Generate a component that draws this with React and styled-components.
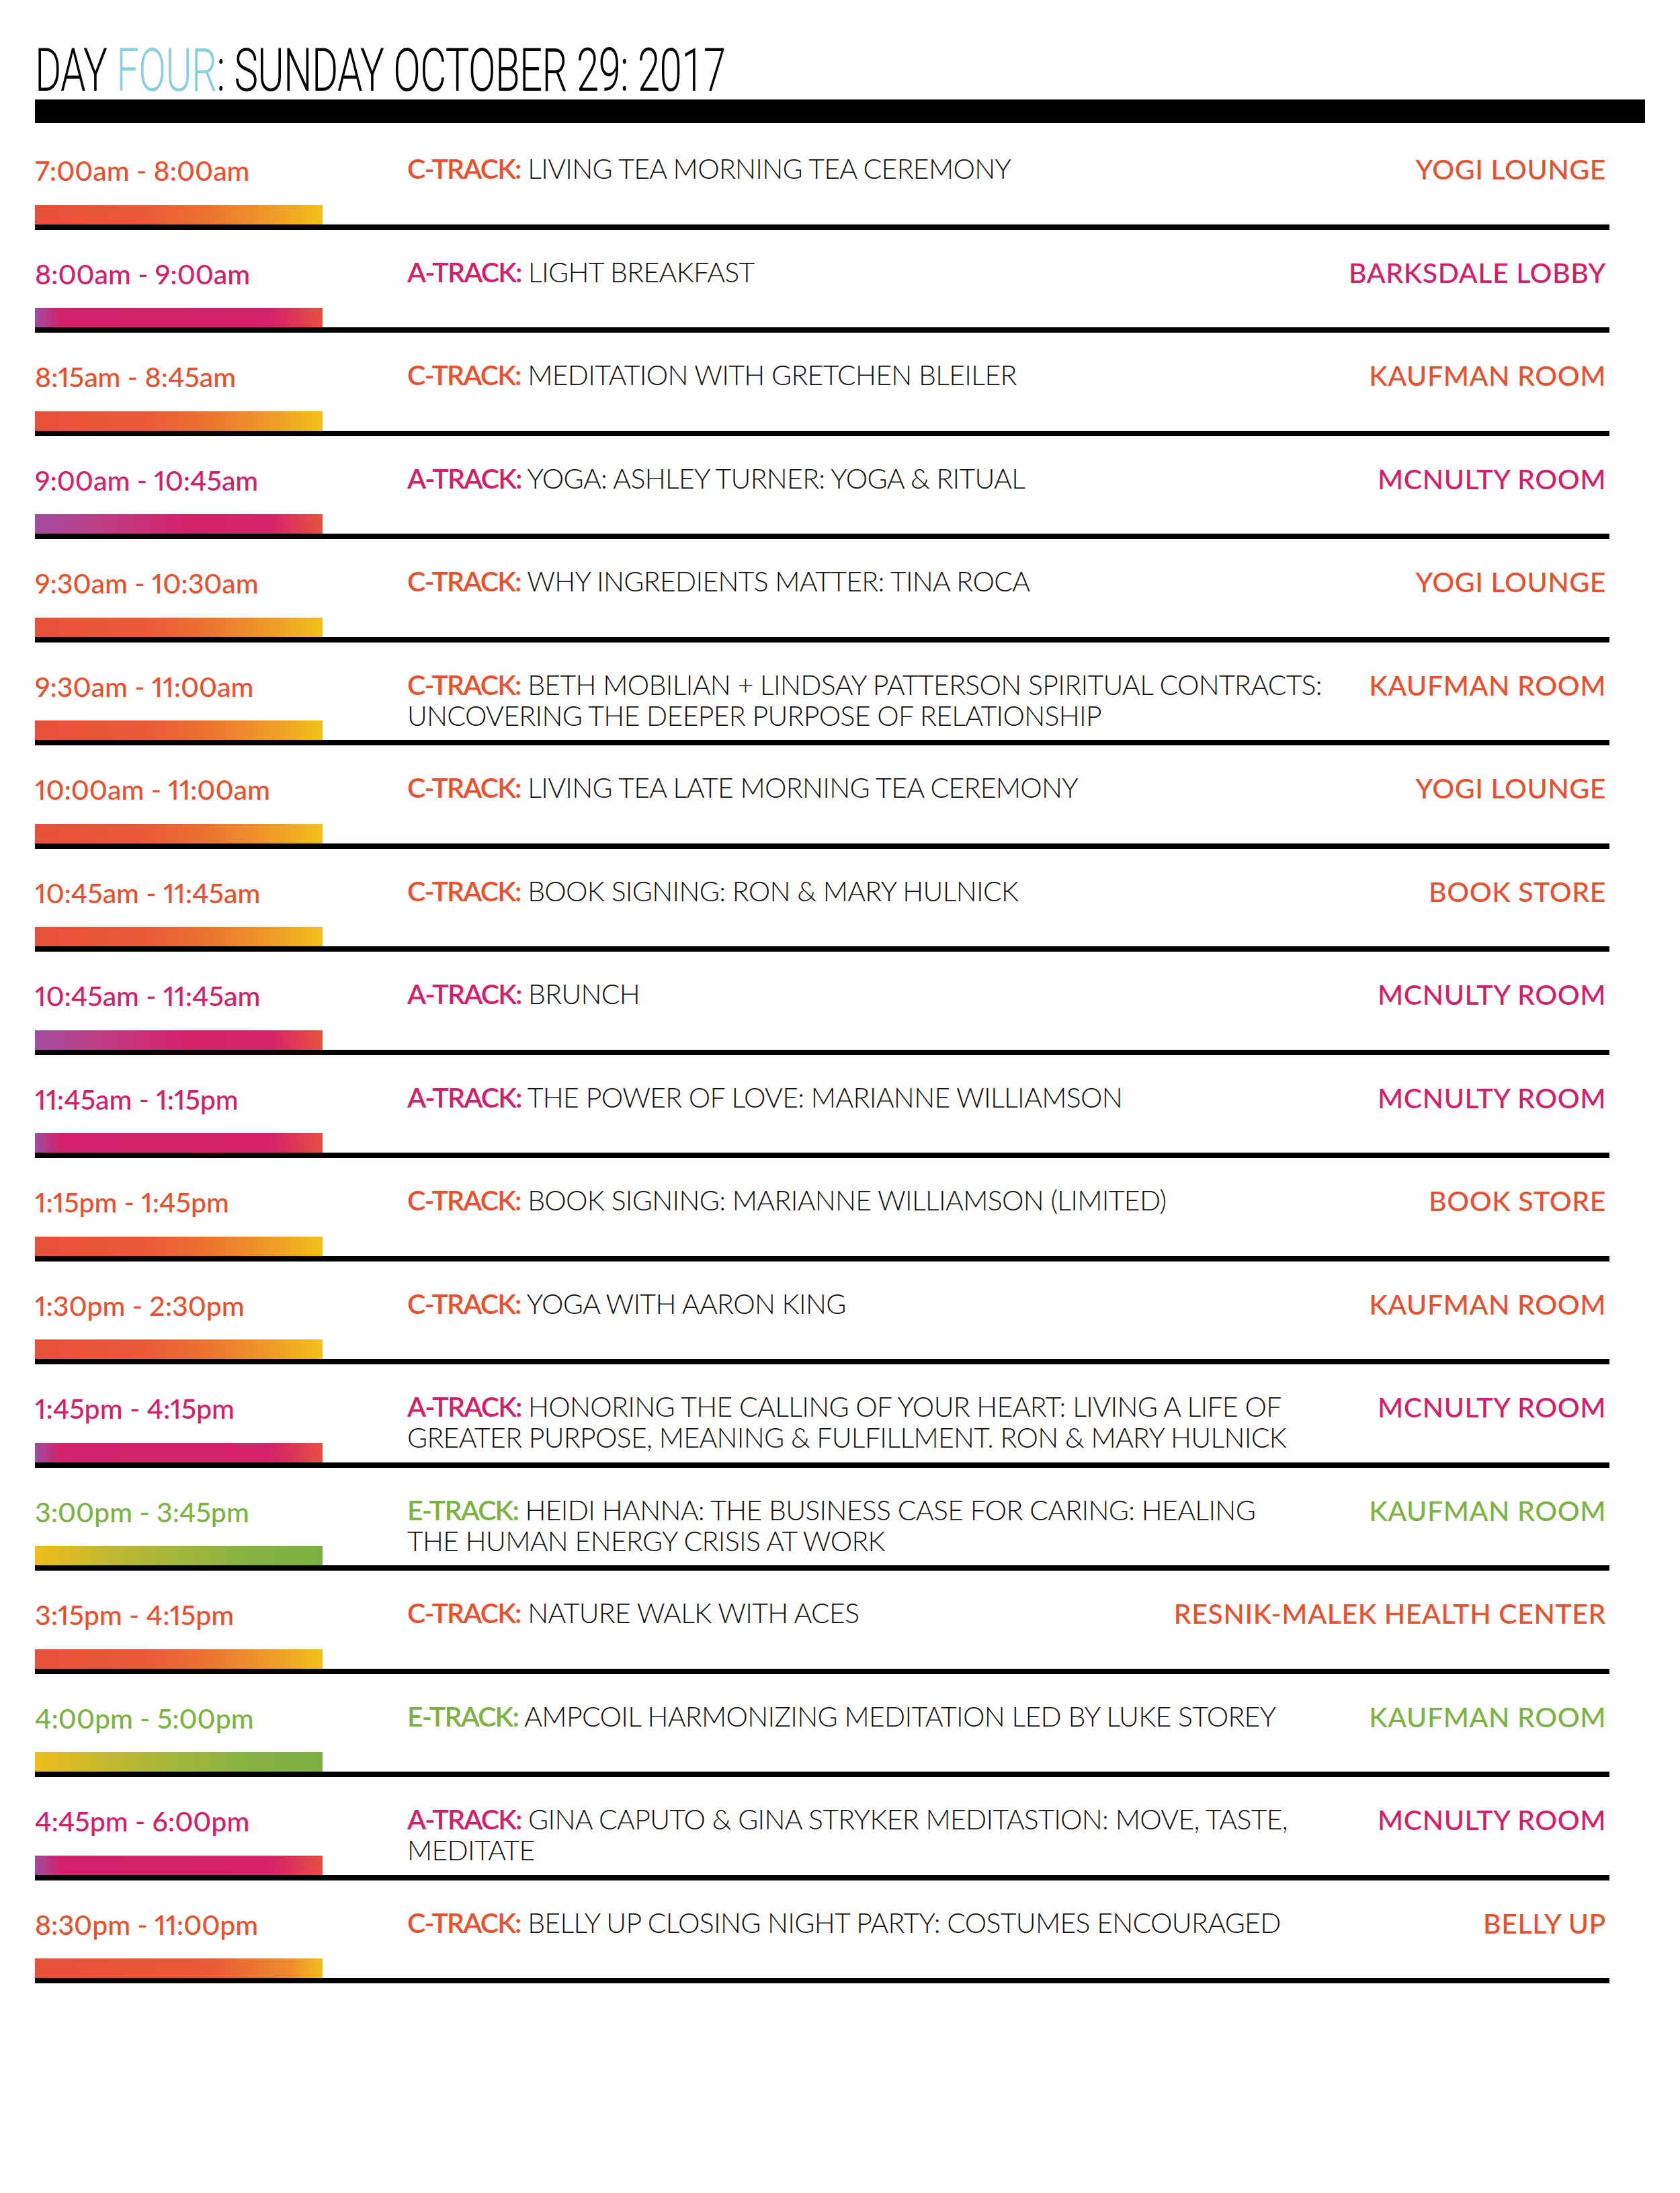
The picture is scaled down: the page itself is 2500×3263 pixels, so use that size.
import React from "react";
import styled, { createGlobalStyle } from "styled-components";

const colors = {
  c: "#e8512f",
  a: "#d2206b",
  e: "#7cb342",
};

const bars = {
  c: "linear-gradient(90deg, #e8503a 0%, #e95a37 38%, #ec7331 60%, #f0a027 85%, #f3c01a 100%)",
  c2: "linear-gradient(82deg, #e8503a 0%, #ea5a36 62%, #ef8b2c 88%, #f4c01b 100%)",
  a1: "linear-gradient(84deg, #9c4fa2 0%, #d2216a 9%, #d5226a 82%, #e5513f 100%)",
  a2: "linear-gradient(84deg, #a24ea0 0%, #c03c82 25%, #d4226a 52%, #d6246a 82%, #e6543c 100%)",
  e: "linear-gradient(90deg, #f0bd1b 0%, #c2b831 25%, #a2b63c 50%, #86b242 75%, #7cb043 100%)",
};

// a title given as an array is broken where the printed schedule breaks it
const sessions = [
  { time: "7:00am - 8:00am", track: "c", bar: "c", title: "LIVING TEA MORNING TEA CEREMONY", room: "YOGI LOUNGE" },
  { time: "8:00am - 9:00am", track: "a", bar: "a1", title: "LIGHT BREAKFAST", room: "BARKSDALE LOBBY" },
  { time: "8:15am - 8:45am", track: "c", bar: "c", title: "MEDITATION WITH GRETCHEN BLEILER", room: "KAUFMAN ROOM" },
  { time: "9:00am - 10:45am", track: "a", bar: "a2", title: "YOGA: ASHLEY TURNER: YOGA & RITUAL", room: "MCNULTY ROOM" },
  { time: "9:30am - 10:30am", track: "c", bar: "c", title: "WHY INGREDIENTS MATTER: TINA ROCA", room: "YOGI LOUNGE" },
  { time: "9:30am - 11:00am", track: "c", bar: "c", title: ["BETH MOBILIAN + LINDSAY PATTERSON SPIRITUAL CONTRACTS:", "UNCOVERING THE DEEPER PURPOSE OF RELATIONSHIP"], room: "KAUFMAN ROOM" },
  { time: "10:00am - 11:00am", track: "c", bar: "c", title: "LIVING TEA LATE MORNING TEA CEREMONY", room: "YOGI LOUNGE" },
  { time: "10:45am - 11:45am", track: "c", bar: "c", title: "BOOK SIGNING: RON & MARY HULNICK", room: "BOOK STORE" },
  { time: "10:45am - 11:45am", track: "a", bar: "a2", title: "BRUNCH", room: "MCNULTY ROOM" },
  { time: "11:45am - 1:15pm", track: "a", bar: "a1", title: "THE POWER OF LOVE: MARIANNE WILLIAMSON", room: "MCNULTY ROOM" },
  { time: "1:15pm - 1:45pm", track: "c", bar: "c", title: "BOOK SIGNING: MARIANNE WILLIAMSON (LIMITED)", room: "BOOK STORE" },
  { time: "1:30pm - 2:30pm", track: "c", bar: "c", title: "YOGA WITH AARON KING", room: "KAUFMAN ROOM" },
  { time: "1:45pm - 4:15pm", track: "a", bar: "a1", title: ["HONORING THE CALLING OF YOUR HEART: LIVING A LIFE OF", "GREATER PURPOSE, MEANING & FULFILLMENT. RON & MARY HULNICK"], room: "MCNULTY ROOM" },
  { time: "3:00pm - 3:45pm", track: "e", bar: "e", title: ["HEIDI HANNA: THE BUSINESS CASE FOR CARING: HEALING", "THE HUMAN ENERGY CRISIS AT WORK"], room: "KAUFMAN ROOM" },
  { time: "3:15pm - 4:15pm", track: "c", bar: "c", title: "NATURE WALK WITH ACES", room: "RESNIK-MALEK HEALTH CENTER" },
  { time: "4:00pm - 5:00pm", track: "e", bar: "e", title: "AMPCOIL HARMONIZING MEDITATION LED BY LUKE STOREY", room: "KAUFMAN ROOM" },
  { time: "4:45pm - 6:00pm", track: "a", bar: "a1", title: ["GINA CAPUTO & GINA STRYKER MEDITASTION: MOVE, TASTE,", "MEDITATE"], room: "MCNULTY ROOM" },
  { time: "8:30pm - 11:00pm", track: "c", bar: "c2", title: "BELLY UP CLOSING NIGHT PARTY: COSTUMES ENCOURAGED", room: "BELLY UP" },
];

const GlobalStyle = createGlobalStyle`
  body {
    margin: 0;
    background: #fff;
    font-family: "Lato", "Liberation Sans", sans-serif;
  }
`;

function SessionTitle({ title }) {
  if (!Array.isArray(title)) return title;
  return title.map((line, i) => (
    <React.Fragment key={i}>
      {i > 0 && <br />}
      {line}
    </React.Fragment>
  ));
}

export default function App() {
  return (
    <Page>
      <GlobalStyle />
      <Header>
        <Title>
          DAY <Accent>FOUR</Accent>: SUNDAY OCTOBER 29: 2017
        </Title>
      </Header>
      <HeaderBar />
      <Schedule>
        {sessions.map((s, i) => (
          <Row key={i}>
            <TimeCol>
              <Time $color={colors[s.track]}>{s.time}</Time>
              <Bar $bg={bars[s.bar]} />
            </TimeCol>
            <Session>
              <Track $color={colors[s.track]}>{s.track.toUpperCase()}-TRACK:</Track>{" "}
              <SessionTitle title={s.title} />
            </Session>
            <Room $color={colors[s.track]}>{s.room}</Room>
          </Row>
        ))}
      </Schedule>
    </Page>
  );
}

const Page = styled.div`
  width: 2500px;
  min-height: 3263px;
  box-sizing: border-box;
  padding: 0 0 0 52px;
`;

const Header = styled.div`
  padding-top: 60px;
  height: 88px;
`;

const Title = styled.h1`
  margin: 0;
  font-family: "Roboto", "Liberation Sans", sans-serif;
  font-weight: 300;
  font-size: 89px;
  line-height: 89px;
  letter-spacing: -1px;
  color: #000;
  white-space: nowrap;
  transform: scaleX(0.674);
  transform-origin: left center;
`;

const Accent = styled.span`
  color: #8ccfdc;
`;

const HeaderBar = styled.div`
  width: 2396px;
  height: 35px;
  background: #000;
`;

const Schedule = styled.div`
  width: 2343px;
  margin-top: 5px;
`;

const Row = styled.div`
  display: flex;
  box-sizing: border-box;
  height: 153.5px;
  border-bottom: 8px solid #000;
`;

const TimeCol = styled.div`
  flex: none;
  width: 554px;
  display: flex;
  flex-direction: column;
  justify-content: space-between;
`;

const Time = styled.div`
  padding-top: 43px;
  font-size: 41px;
  line-height: 46px;
  font-weight: 500;
  font-variant-numeric: proportional-nums;
  color: ${(p) => p.$color};
`;

const Bar = styled.div`
  width: 428px;
  height: 29px;
  background: ${(p) => p.$bg};
`;

const Session = styled.div`
  flex: 0 1 1400px;
  padding-top: 40px;
  font-size: 41px;
  line-height: 46px;
  font-weight: 300;
  letter-spacing: -0.7px;
  white-space: nowrap;
  color: #111;
`;

const Track = styled.span`
  font-weight: 600;
  letter-spacing: -1.8px;
  color: ${(p) => p.$color};
`;

const Room = styled.div`
  margin-left: auto;
  padding: 41px 5px 0 0;
  font-size: 41px;
  line-height: 46px;
  font-weight: 500;
  letter-spacing: 0.6px;
  white-space: nowrap;
  color: ${(p) => p.$color};
`;
